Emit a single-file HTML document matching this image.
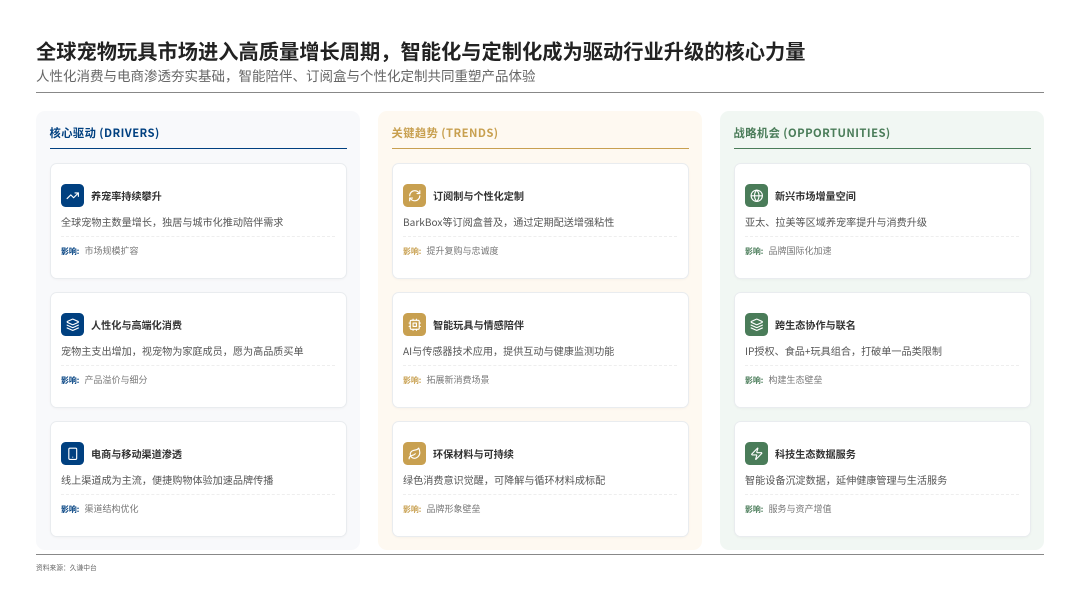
<!DOCTYPE html>
<html lang="zh-CN">
<head>
<meta charset="utf-8">
<title>全球宠物玩具市场</title>
<style>
*{box-sizing:border-box;margin:0;padding:0}
html,body{width:1080px;height:608px;background:#fff;overflow:hidden}
body{position:relative;font-family:"Noto Sans CJK SC","Liberation Sans",sans-serif;color:#333}
#wrap{position:absolute;left:0;top:0;width:1080px;height:608px;background:#fff;filter:blur(.28px)}
.t,.abs{position:absolute;white-space:nowrap}
#title{left:36px;top:35.5px;line-height:30px;font-size:20.25px;font-weight:700;color:#222}
#sub{left:36px;top:65px;line-height:20px;font-size:13.5px;color:#666}
.rule{position:absolute;left:36px;width:1008px;height:1px;background:#888}
#src{left:36px;top:561px;line-height:12px;font-size:6.75px;color:#666}
.panel{position:absolute;top:111px;width:324px;height:439px;border-radius:9px}
.hd{position:absolute;left:13.5px;top:13px;line-height:18px;font-size:11.25px;letter-spacing:.45px;font-weight:700;white-space:nowrap;font-family:"Noto Sans CJK SC",sans-serif}
.hl{position:absolute;left:13.5px;width:297px;top:37px;height:1.2px}
.card{position:absolute;left:13.5px;width:297px;height:115.5px;background:#fff;border:1px solid #e9ecef;border-radius:6.75px;box-shadow:0 1px 2px rgba(0,0,0,.03)}
.c1{top:52px}.c2{top:181px}.c3{top:310px}
.ic{position:absolute;left:10.5px;top:20px;width:22.5px;height:22.5px;border-radius:4.5px;display:flex;align-items:center;justify-content:center}
.ic svg{width:13.5px;height:13.5px;fill:none;stroke:#fff;stroke-width:2;stroke-linecap:round;stroke-linejoin:round}
.ct{position:absolute;left:40.5px;top:23px;line-height:18px;font-size:10.125px;font-weight:700;color:#333;white-space:nowrap}
.cd{position:absolute;left:10.5px;top:48.5px;line-height:18px;font-size:10.125px;color:#555;white-space:nowrap}
.dv{position:absolute;left:10.5px;right:11px;top:71.5px;border-top:1px dashed #eee}
.im{position:absolute;left:10.5px;top:80px;line-height:14px;font-size:9px;color:#777;white-space:nowrap}
.im b{font-weight:700;font-size:7.9px;margin-right:5.2px}
.blue .ic{background:#004080}.blue .hd,.blue b{color:#004080}.blue .hl{background:#004080}
.gold .ic{background:#c8a050}.gold .hd,.gold b{color:#c8a050}.gold .hl{background:#c8a050}
.green .ic{background:#4a7c59}.green .hd,.green b{color:#4a7c59}.green .hl{background:#4a7c59}
</style>
</head>
<body>
<div id="wrap">
<div class="t" id="title">全球宠物玩具市场进入高质量增长周期，智能化与定制化成为驱动行业升级的核心力量</div>
<div class="t" id="sub">人性化消费与电商渗透夯实基础，智能陪伴、订阅盒与个性化定制共同重塑产品体验</div>
<div class="rule" style="top:92px"></div>

<div class="panel blue" style="left:36px;background:#f8f9fb">
  <div class="hd">核心驱动 (DRIVERS)</div><div class="hl"></div>
  <div class="card c1">
    <div class="ic"><svg viewBox="0 0 24 24"><polyline points="22 7 13.5 15.5 8.5 10.5 2 17"/><polyline points="16 7 22 7 22 13"/></svg></div>
    <div class="ct">养宠率持续攀升</div><div class="cd">全球宠物主数量增长，独居与城市化推动陪伴需求</div><div class="dv"></div>
    <div class="im"><b>影响:</b>市场规模扩容</div>
  </div>
  <div class="card c2">
    <div class="ic"><svg viewBox="0 0 24 24"><path d="m12.83 2.18a2 2 0 0 0-1.66 0L2.6 6.08a1 1 0 0 0 0 1.83l8.58 3.91a2 2 0 0 0 1.66 0l8.58-3.9a1 1 0 0 0 0-1.83Z"/><path d="m22 17.65-9.17 4.16a2 2 0 0 1-1.66 0L2 17.65"/><path d="m22 12.65-9.17 4.16a2 2 0 0 1-1.66 0L2 12.65"/></svg></div>
    <div class="ct">人性化与高端化消费</div><div class="cd">宠物主支出增加，视宠物为家庭成员，愿为高品质买单</div><div class="dv"></div>
    <div class="im"><b>影响:</b>产品溢价与细分</div>
  </div>
  <div class="card c3">
    <div class="ic"><svg viewBox="0 0 24 24"><rect x="5" y="2" width="14" height="20" rx="2"/><path d="M12 18h.01"/></svg></div>
    <div class="ct">电商与移动渠道渗透</div><div class="cd">线上渠道成为主流，便捷购物体验加速品牌传播</div><div class="dv"></div>
    <div class="im"><b>影响:</b>渠道结构优化</div>
  </div>
</div>

<div class="panel gold" style="left:378px;background:#fef9f1">
  <div class="hd">关键趋势 (TRENDS)</div><div class="hl"></div>
  <div class="card c1">
    <div class="ic"><svg viewBox="0 0 24 24"><path d="M3 12a9 9 0 0 1 9-9 9.75 9.75 0 0 1 6.74 2.74L21 8"/><path d="M21 3v5h-5"/><path d="M21 12a9 9 0 0 1-9 9 9.75 9.75 0 0 1-6.74-2.74L3 16"/><path d="M8 16H3v5"/></svg></div>
    <div class="ct">订阅制与个性化定制</div><div class="cd">BarkBox等订阅盒普及，通过定期配送增强粘性</div><div class="dv"></div>
    <div class="im"><b>影响:</b>提升复购与忠诚度</div>
  </div>
  <div class="card c2">
    <div class="ic"><svg viewBox="0 0 24 24"><rect x="4" y="4" width="16" height="16" rx="2"/><rect x="9" y="9" width="6" height="6"/><path d="M15 2v2M15 20v2M2 15h2M2 9h2M20 15h2M20 9h2M9 2v2M9 20v2"/></svg></div>
    <div class="ct">智能玩具与情感陪伴</div><div class="cd">AI与传感器技术应用，提供互动与健康监测功能</div><div class="dv"></div>
    <div class="im"><b>影响:</b>拓展新消费场景</div>
  </div>
  <div class="card c3">
    <div class="ic"><svg viewBox="0 0 24 24"><path d="M11 20A7 7 0 0 1 9.8 6.1C15.5 5 17 4.48 19 2c1 2 2 4.18 2 8 0 5.5-4.78 10-10 10Z"/><path d="M2 21c0-3 1.85-5.36 5.08-6C9.5 14.52 12 13 13 12"/></svg></div>
    <div class="ct">环保材料与可持续</div><div class="cd">绿色消费意识觉醒，可降解与循环材料成标配</div><div class="dv"></div>
    <div class="im"><b>影响:</b>品牌形象壁垒</div>
  </div>
</div>

<div class="panel green" style="left:720px;background:#f1f7f3">
  <div class="hd">战略机会 (OPPORTUNITIES)</div><div class="hl"></div>
  <div class="card c1">
    <div class="ic"><svg viewBox="0 0 24 24"><circle cx="12" cy="12" r="10"/><path d="M12 2a14.5 14.5 0 0 0 0 20 14.5 14.5 0 0 0 0-20"/><path d="M2 12h20"/></svg></div>
    <div class="ct">新兴市场增量空间</div><div class="cd">亚太、拉美等区域养宠率提升与消费升级</div><div class="dv"></div>
    <div class="im"><b>影响:</b>品牌国际化加速</div>
  </div>
  <div class="card c2">
    <div class="ic"><svg viewBox="0 0 24 24"><path d="m12.83 2.18a2 2 0 0 0-1.66 0L2.6 6.08a1 1 0 0 0 0 1.83l8.58 3.91a2 2 0 0 0 1.66 0l8.58-3.9a1 1 0 0 0 0-1.83Z"/><path d="m22 17.65-9.17 4.16a2 2 0 0 1-1.66 0L2 17.65"/><path d="m22 12.65-9.17 4.16a2 2 0 0 1-1.66 0L2 12.65"/></svg></div>
    <div class="ct">跨生态协作与联名</div><div class="cd">IP授权、食品+玩具组合，打破单一品类限制</div><div class="dv"></div>
    <div class="im"><b>影响:</b>构建生态壁垒</div>
  </div>
  <div class="card c3">
    <div class="ic"><svg viewBox="0 0 24 24"><path d="M4 14a1 1 0 0 1-.78-1.63l9.9-10.2a.5.5 0 0 1 .86.46l-1.92 6.02A1 1 0 0 0 13 10h7a1 1 0 0 1 .78 1.63l-9.9 10.2a.5.5 0 0 1-.86-.46l1.92-6.02A1 1 0 0 0 11 14z"/></svg></div>
    <div class="ct">科技生态数据服务</div><div class="cd">智能设备沉淀数据，延伸健康管理与生活服务</div><div class="dv"></div>
    <div class="im"><b>影响:</b>服务与资产增值</div>
  </div>
</div>

<div class="rule" style="top:554px"></div>
<div class="t" id="src">资料来源：久谦中台</div>
</div>
</body>
</html>
